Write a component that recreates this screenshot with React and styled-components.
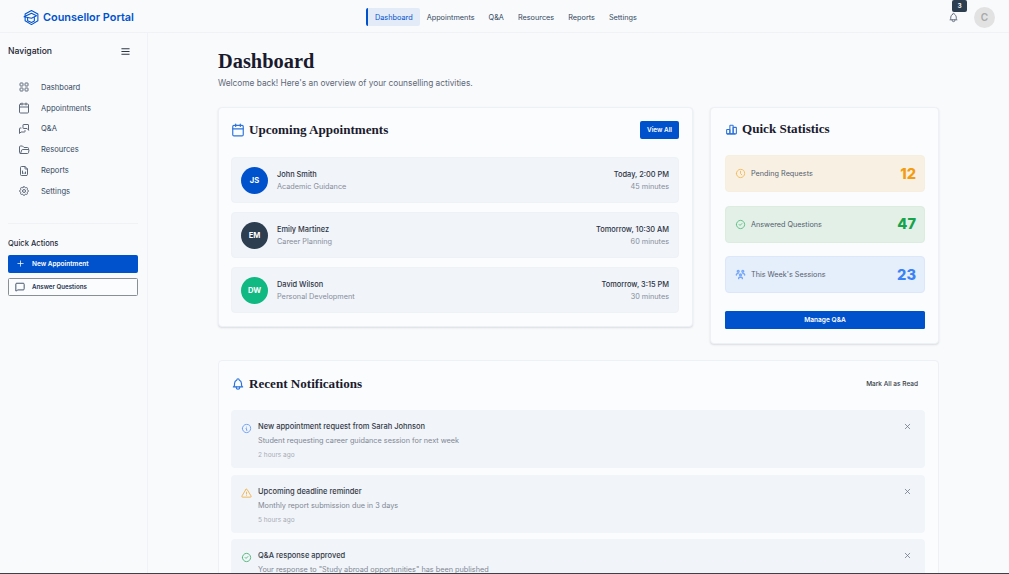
import React from 'react';
import styled, { createGlobalStyle } from 'styled-components';
import {
  TbBell, TbMenu2, TbLayoutGrid, TbMessages, TbFolderOpen, TbFileAnalytics, TbSettings,
  TbPlus, TbChartBar, TbClock, TbCircleCheck, TbUsersGroup, TbInfoCircle, TbAlertTriangle, TbX,
} from 'react-icons/tb';
import { Calendar, MessageSquare } from 'lucide-react';

const Global = createGlobalStyle`
  html, body { margin: 0; padding: 0; height: 100%; overflow: hidden; background: #f9fafc; }
  * { box-sizing: border-box; }
  body { font-family: Inter, "Noto Sans", sans-serif; color: #2c3e50; }
`;

const Shell = styled.div`
  height: 574px; display: flex; flex-direction: column; overflow: hidden;
  border-bottom: 1px solid #3d4148; background: #f9fafc;
`;
const Header = styled.header`
  height: 33px; flex: none; display: flex; align-items: center; padding: 2px 14px 0 23px;
  border-bottom: 1px solid #f0f2f6; position: relative;
`;
const Logo = styled.div`
  width: 343px; display: flex; align-items: center; gap: 3px; color: #0052cc;
  font-size: 10.9px; font-weight: 600; white-space: nowrap;
`;
const TopNav = styled.nav`display: flex; align-items: center; flex: 1;`;
const TopLink = styled.a`
  height: 18px; padding: 0 7px; display: flex; align-items: center; font-size: 7.3px;
  color: ${p => (p.$active ? '#0052cc' : '#34495e')};
  background: ${p => (p.$active ? '#e4ebf8' : 'transparent')};
  border-left: ${p => (p.$active ? '2px solid #0052cc' : 'none')};
  border-radius: ${p => (p.$active ? '2px' : '0')};
`;
const HeaderRight = styled.div`display: flex; align-items: center; gap: 15px; position: relative; color: #5d6878;`;
const BellWrap = styled.div`display: flex; position: relative;`;
const Badge = styled.span`
  position: absolute; top: -12px; left: 4px; width: 15px; height: 12px; border-radius: 2px;
  background: #2c3e50; color: #fff; font-size: 6.6px; font-weight: 600;
  display: flex; align-items: center; justify-content: center;
`;
const UserAvatar = styled.div`
  width: 21px; height: 21px; border-radius: 50%; background: #e2e2e2; color: #a9a9a9;
  font-size: 10px; font-weight: 600; display: flex; align-items: center; justify-content: center;
`;

const Body = styled.div`flex: 1; min-height: 0; display: flex;`;
const Sidebar = styled.aside`
  width: 148px; flex: none; border-right: 1px solid #f0f2f6; padding: 12px 9px 0 8px;
  display: flex; flex-direction: column;
`;
const SideHead = styled.div`
  display: flex; align-items: center; justify-content: space-between; height: 12px;
  font-size: 8.6px; font-weight: 500; color: #1a2433; padding-right: 7.5px; margin-bottom: 20px;
`;
const SideNav = styled.div`display: flex; flex-direction: column; padding-left: 10px;`;
const SideItem = styled.div`
  height: 20.8px; display: flex; align-items: center; gap: 11px; font-size: 7.6px; color: #34495e;
  & > svg { color: #5d6878; flex: none; }
`;
const Divider = styled.div`height: 1px; background: #f0f2f6; margin-top: 21px;`;
const QuickTitle = styled.div`font-size: 7.6px; font-weight: 500; color: #1f2a3a; margin: 15px 0 7px;`;
const ActionButton = styled.button`
  height: 18px; width: 100%; display: flex; align-items: center; padding: 0 0 0 ${p => (p.$outline ? '6px' : '7px')};
  border-radius: 1.5px; font: 600 ${p => (p.$outline ? '6.2px' : '6.5px')} Inter, sans-serif; margin-bottom: 5px;
  gap: 7px; white-space: nowrap;
  background: ${p => (p.$outline ? '#fbfcfd' : '#0052cc')};
  color: ${p => (p.$outline ? '#1f3350' : '#fff')};
  border: 1px solid ${p => (p.$outline ? '#8a8f96' : '#0052cc')};
`;

const Main = styled.main`flex: 1; min-width: 0; overflow: hidden; padding: 17px 70px 0;`;
const Title = styled.h1`
  margin: 0; font: 700 20.4px/22px "Liberation Serif", serif; color: #1a1a2e;
`;
const Subtitle = styled.p`margin: 5px 0 18px; font-size: 8.3px; line-height: 12px; color: #5d6878;`;
const Grid = styled.div`display: grid; grid-template-columns: 475px 229px; gap: 17px; align-items: start;`;
const Card = styled.section`
  background: #fbfcfd; border: 1px solid #edf0f5; border-radius: 4px; padding: 13px 13px 13px 12px;
  box-shadow: 0 1px 2px rgba(60, 70, 90, 0.16);
  ${p => p.$side && 'padding-left: 14px; padding-bottom: 14px;'}
  ${p => p.$full && 'margin-top: 16px; box-shadow: none; padding-top: 14px;'}
`;
const CardHead = styled.div`
  display: flex; align-items: center; justify-content: space-between; margin-bottom: 18px;
  height: ${p => (p.$short ? '16px' : p.$full ? '17px' : '18px')};
`;
const CardTitle = styled.h2`
  margin: 0; display: flex; align-items: center; gap: 4px; font: 700 13.1px "Liberation Serif", serif; color: #1a1a2e;
  & > svg { color: #2f73d9; flex: none; }
`;
const SmallButton = styled.button`
  height: 18px; width: 39px; padding: 0; border: 0; border-radius: 2px; background: #0052cc; color: #fff;
  font: 600 6.4px Inter, sans-serif;
`;
const TextButton = styled.button`
  border: 0; background: none; padding: 0; margin-right: 7px; color: #333a45; font: 500 6.5px Inter, sans-serif;
`;
const List = styled.div`display: flex; flex-direction: column; gap: 9px;`;
const Row = styled.div`
  height: 46px; border-radius: 4px; background: #f1f4f9; border: 1px solid #eef1f6; padding: 0 9px;
  display: flex; align-items: center; justify-content: space-between;
`;
const Person = styled.div`display: flex; align-items: center; gap: 9px;`;
const Avatar = styled.div`
  width: 27px; height: 27px; border-radius: 50%; background: ${p => p.$bg}; color: #fff;
  font-size: 7.6px; font-weight: 700; display: flex; align-items: center; justify-content: center;
`;
const Name = styled.div`font-size: 7.4px; line-height: 11px; font-weight: 500; color: #2c3344;`;
const Meta = styled.div`font-size: 7.3px; line-height: 11px; color: #868e9b; margin-top: 1px;`;
const When = styled.div`text-align: right;`;

const Stats = styled.div`display: flex; flex-direction: column; gap: 13.5px; margin-bottom: 18px;`;
const Stat = styled.div`
  height: 37px; border-radius: 4px; background: ${p => p.$bg}; border: 1px solid ${p => p.$line};
  padding: 0 8px 0 9px; display: flex; align-items: center; gap: 5px; font-size: 7.25px; color: #56606e;
  & > svg { color: ${p => p.$fg}; opacity: .65; flex: none; }
`;
const StatValue = styled.strong`
  margin-left: auto; font-size: 14.6px; font-weight: 800; color: ${p => p.$fg};
`;
const WideButton = styled.button`
  width: 100%; height: 18px; border: 0; border-radius: 1.5px; background: #0052cc; color: #fff;
  font: 600 6.6px Inter, sans-serif; display: block;
`;

const Notes = styled.div`display: flex; flex-direction: column; gap: 6.5px;`;
const Note = styled.div`
  height: 58px; flex: none; border-radius: 4px; background: #f1f4f9; padding: 11px 13px 0 10px;
  display: flex; align-items: flex-start; gap: 6px;
  & > svg:first-child { color: ${p => p.$fg}; flex: none; margin-top: 2px; opacity: .75; }
`;
const NoteBody = styled.div`flex: 1; min-width: 0;`;
const NoteTitle = styled.div`font-size: 7.5px; line-height: 11px; font-weight: 500; color: #333a48;`;
const NoteText = styled.div`font-size: 7.3px; line-height: 11px; color: #808894; margin-top: 3px;`;
const NoteTime = styled.div`font-size: 6.5px; line-height: 10px; color: #a7adb6; margin-top: 4px;`;
const Close = styled(TbX)`color: #6b7280; flex: none; margin-top: 1px;`;

const CapIcon = () => (
  <svg width="17" height="17" viewBox="0 0 24 24" fill="none" stroke="currentColor" strokeWidth="1.5" strokeLinecap="round" strokeLinejoin="round">
    <path d="M12 2 21 7v9.5L12 22 3 16.5V7z" />
    <path d="M1.5 11 12 6l7 3.5-7 3.5z" />
    <path d="M6.5 13v3.5l5.5 2.5 4-2v-5" />
  </svg>
);

const sideItems = [
  [TbLayoutGrid, 'Dashboard'], [Calendar, 'Appointments'], [TbMessages, 'Q&A'],
  [TbFolderOpen, 'Resources'], [TbFileAnalytics, 'Reports'], [TbSettings, 'Settings'],
];
const topItems = ['Dashboard', 'Appointments', 'Q&A', 'Resources', 'Reports', 'Settings'];
const appts = [
  ['JS', '#0052cc', 'John Smith', 'Academic Guidance', 'Today, 2:00 PM', '45 minutes'],
  ['EM', '#2c3e50', 'Emily Martinez', 'Career Planning', 'Tomorrow, 10:30 AM', '60 minutes'],
  ['DW', '#10b981', 'David Wilson', 'Personal Development', 'Tomorrow, 3:15 PM', '30 minutes'],
];
const stats = [
  [TbClock, 'Pending Requests', '12', '#f8f1e3', '#f6efe0', '#f39c12', 2],
  [TbCircleCheck, 'Answered Questions', '47', '#e2f0e8', '#dcecdf', '#16a34a', 2],
  [TbUsersGroup, "This Week's Sessions", '23', '#e5eefb', '#dce7fa', '#3b82f6', 3],
];
const notes = [
  [TbInfoCircle, '#3b82f6', 'New appointment request from Sarah Johnson', 'Student requesting career guidance session for next week', '2 hours ago'],
  [TbAlertTriangle, '#f39c12', 'Upcoming deadline reminder', 'Monthly report submission due in 3 days', '5 hours ago'],
  [TbCircleCheck, '#16a34a', 'Q&A response approved', 'Your response to "Study abroad opportunities" has been published', '1 day ago'],
];

export default function App() {
  return (
    <Shell>
      <Global />
      <Header>
        <Logo><CapIcon />Counsellor Portal</Logo>
        <TopNav>
          {topItems.map((t, i) => <TopLink key={t} $active={i === 0}>{t}</TopLink>)}
        </TopNav>
        <HeaderRight>
          <BellWrap><TbBell size={11} /><Badge>3</Badge></BellWrap>
          <UserAvatar>C</UserAvatar>
        </HeaderRight>
      </Header>
      <Body>
        <Sidebar>
          <SideHead>Navigation<TbMenu2 size={11} /></SideHead>
          <SideNav>
            {sideItems.map(([I, t]) => <SideItem key={t}><I size={12} />{t}</SideItem>)}
          </SideNav>
          <Divider />
          <QuickTitle>Quick Actions</QuickTitle>
          <ActionButton><TbPlus size={9} />New Appointment</ActionButton>
          <ActionButton $outline><MessageSquare size={10} />Answer Questions</ActionButton>
        </Sidebar>
        <Main>
          <Title>Dashboard</Title>
          <Subtitle>Welcome back! Here's an overview of your counselling activities.</Subtitle>
          <Grid>
            <Card>
              <CardHead>
                <CardTitle><Calendar size={14} />Upcoming Appointments</CardTitle>
                <SmallButton>View All</SmallButton>
              </CardHead>
              <List>
                {appts.map(a => (
                  <Row key={a[2]}>
                    <Person>
                      <Avatar $bg={a[1]}>{a[0]}</Avatar>
                      <div><Name>{a[2]}</Name><Meta>{a[3]}</Meta></div>
                    </Person>
                    <When><Name>{a[4]}</Name><Meta>{a[5]}</Meta></When>
                  </Row>
                ))}
              </List>
            </Card>
            <Card $side>
              <CardHead $short>
                <CardTitle><TbChartBar size={13} />Quick Statistics</CardTitle>
              </CardHead>
              <Stats>
                {stats.map(([I, t, v, bg, line, fg, sw]) => (
                  <Stat key={t} $bg={bg} $line={line} $fg={fg}>
                    <I size={11} strokeWidth={sw} />{t}<StatValue $fg={fg}>{v}</StatValue>
                  </Stat>
                ))}
              </Stats>
              <WideButton>Manage Q&amp;A</WideButton>
            </Card>
          </Grid>
          <Card $full>
            <CardHead $full>
              <CardTitle><TbBell size={14} />Recent Notifications</CardTitle>
              <TextButton>Mark All as Read</TextButton>
            </CardHead>
            <Notes>
              {notes.map(([I, fg, t, d, w]) => (
                <Note key={t} $fg={fg}>
                  <I size={11} />
                  <NoteBody><NoteTitle>{t}</NoteTitle><NoteText>{d}</NoteText><NoteTime>{w}</NoteTime></NoteBody>
                  <Close size={9} />
                </Note>
              ))}
            </Notes>
          </Card>
        </Main>
      </Body>
    </Shell>
  );
}
